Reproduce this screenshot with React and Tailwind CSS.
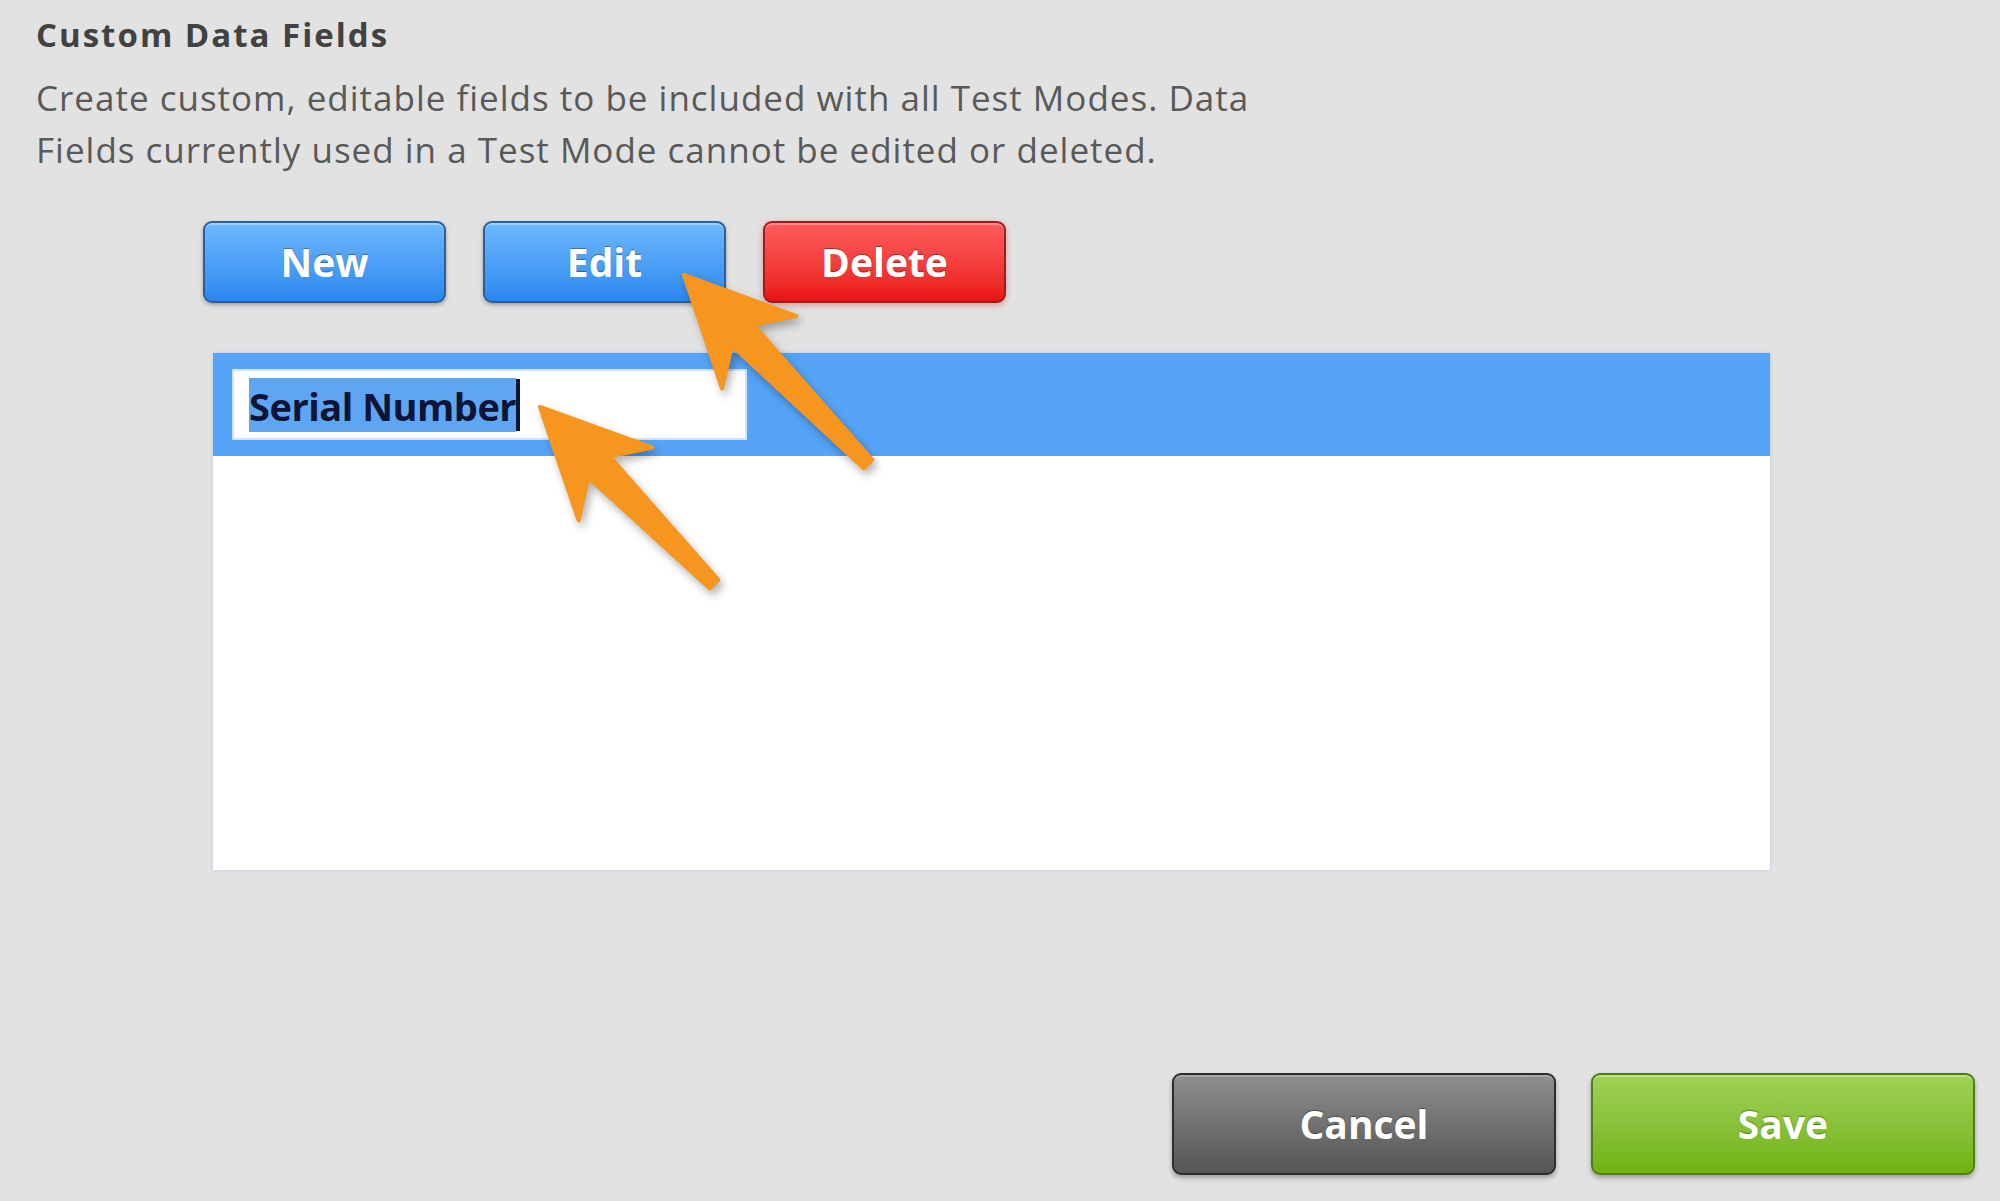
import React from "react";

function Arrow({ x0, y0, x1, y1 }) {
  const dx = x1 - x0;
  const dy = y1 - y0;
  const L = Math.sqrt(dx * dx + dy * dy);
  const ang = (Math.atan2(dy, dx) * 180) / Math.PI;
  const W = 52, hw = 108, hn = 84, s = 15, t = 6;
  const pts = [
    [0, -t],
    [L - hn, -s],
    [L - hw, -W],
    [L, 0],
    [L - hw, W],
    [L - hn, s],
    [0, t],
  ]
    .map((p) => p.join(","))
    .join(" ");
  return (
    <g transform={`translate(${x0} ${y0}) rotate(${ang})`}>
      <polygon points={pts} fill="#f7961e" strokeLinejoin="round" stroke="#f7961e" strokeWidth="4" />
    </g>
  );
}

function Btn({ children, cls, w, h }) {
  return (
    <div
      className={`flex items-center justify-center rounded-[9px] border-2 font-bold text-white text-[39px] [text-shadow:0_-1px_1px_rgba(0,0,0,0.35)] ${cls}`}
      style={{ width: w, height: h }}
    >
      {children}
    </div>
  );
}

export default function App() {
  return (
    <div className="relative w-[2000px] h-[1201px] overflow-hidden bg-[#e2e2e2] font-['Open_Sans',sans-serif]">
      <div className="flex flex-col pl-[36px] pt-[13px]">
        <h1 className="text-[33px] leading-[44px] font-bold text-[#424242] tracking-[2px]">
          Custom Data Fields
        </h1>
        <p className="mt-[15px] text-[35px] leading-[52px] text-[#595959] tracking-[1px]">
          Create custom, editable fields to be included with all Test Modes. Data
          <br />
          Fields currently used in a Test Mode cannot be edited or deleted.
        </p>

        <div className="mt-[45px] ml-[167px] flex gap-[37px]">
          <Btn
            w={243}
            h={82}
            cls="border-[#2a5f9e] bg-linear-to-b from-[#6db8ff] to-[#2a88ee] shadow-[inset_0_2px_0_rgba(255,255,255,0.35),0_2px_4px_rgba(0,0,0,0.3)]"
          >
            New
          </Btn>
          <Btn
            w={243}
            h={82}
            cls="border-[#2a5f9e] bg-linear-to-b from-[#6db8ff] to-[#2a88ee] shadow-[inset_0_2px_0_rgba(255,255,255,0.35),0_2px_4px_rgba(0,0,0,0.3)]"
          >
            Edit
          </Btn>
          <Btn
            w={243}
            h={82}
            cls="border-[#9e1c1c] bg-linear-to-b from-[#ff5c5c] to-[#e91212] shadow-[inset_0_2px_0_rgba(255,255,255,0.3),0_2px_6px_rgba(200,0,0,0.35)]"
          >
            Delete
          </Btn>
        </div>

        <div className="mt-[50px] ml-[177px] w-[1557px] h-[517px] bg-white shadow-[0_0_3px_rgba(150,190,230,0.6)]">
          <div className="h-[103px] bg-[#55a4f9] pl-[19px] pt-[16px]">
            <div className="flex h-[71px] w-[515px] items-center bg-white pl-[15px] border-2 border-[#cfe4fb]">
              <span className="bg-[#5ea6f4] text-[#0c1536] font-bold text-[38px] leading-[52px] tracking-[-0.5px] pt-[2px]">
                Serial Number
              </span>
              <span className="h-[52px] w-[4px] bg-[#0c1536]" />
            </div>
          </div>
        </div>

        <div className="mt-[203px] flex justify-end gap-[35px] pr-[25px]">
          <Btn
            w={384}
            h={102}
            cls="border-[#2e2e2e] bg-linear-to-b from-[#8e8e8e] to-[#555555] shadow-[inset_0_2px_0_rgba(255,255,255,0.25),0_3px_5px_rgba(0,0,0,0.3)] text-[38px]"
          >
            Cancel
          </Btn>
          <Btn
            w={384}
            h={102}
            cls="border-[#4f7d16] bg-linear-to-b from-[#a0d156] to-[#70b20a] shadow-[inset_0_2px_0_rgba(255,255,255,0.3),0_3px_5px_rgba(0,0,0,0.3)] text-[38px]"
          >
            Save
          </Btn>
        </div>
      </div>

      <svg
        className="pointer-events-none absolute left-0 top-0 drop-shadow-[3px_5px_4px_rgba(0,0,0,0.3)]"
        width="2000"
        height="1201"
        viewBox="0 0 2000 1201"
      >
        <Arrow x0={868} y0={464} x1={684} y1={275} />
        <Arrow x0={714} y0={584} x1={540} y1={407} />
      </svg>
    </div>
  );
}
